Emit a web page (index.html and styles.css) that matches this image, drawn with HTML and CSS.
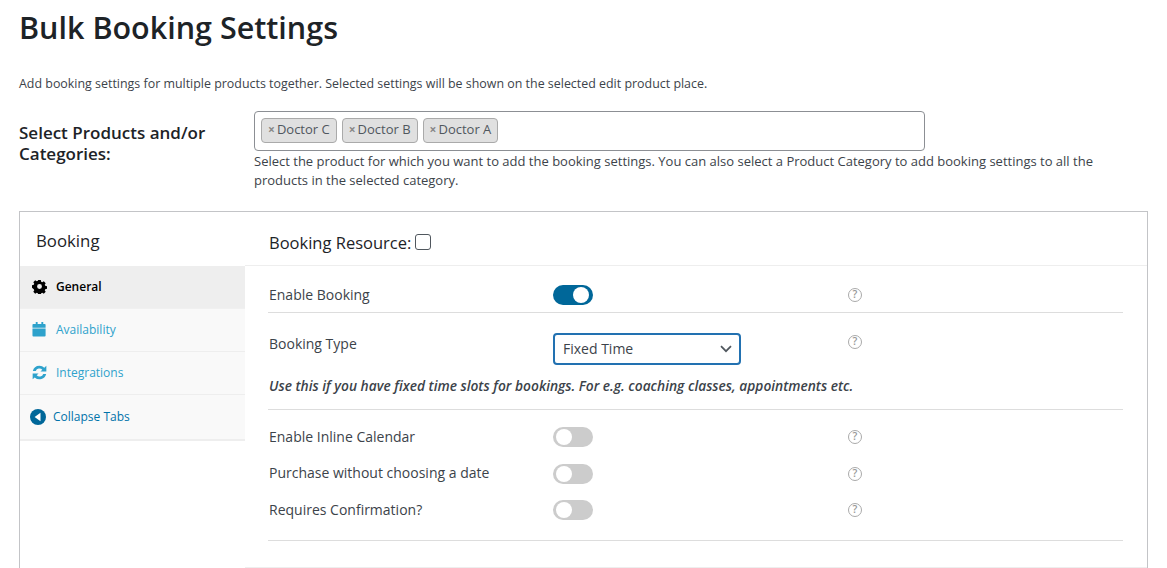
FILE: index.html
```html
<!DOCTYPE html>
<html lang="en">
<head>
  <meta charset="UTF-8">
  <title>Bulk Booking Settings</title>
  <link rel="stylesheet" href="styles.css">
</head>
<body>
  <h1>Bulk Booking Settings</h1>
  <p class="intro">Add booking settings for multiple products together. Selected settings will be shown on the selected edit product place.</p>

  <div class="select-row">
    <label class="select-label">Select Products and/or Categories:</label>
    <div class="select-col">
      <div class="tag-box">
        <span class="tag"><span class="tag-x">×</span>Doctor C</span>
        <span class="tag"><span class="tag-x">×</span>Doctor B</span>
        <span class="tag"><span class="tag-x">×</span>Doctor A</span>
      </div>
      <p class="select-help">Select the product for which you want to add the booking settings. You can also select a Product Category to add booking settings to all the products in the selected category.</p>
    </div>
  </div>

  <div class="card">
    <div class="sidebar">
      <h2 class="side-title">Booking</h2>
      <ul class="tabs">
        <li class="tab active">
          <svg class="tab-icon" viewBox="0 0 16 16"><path fill="currentColor" fill-rule="evenodd" d="M6.6 1h2.8l.4 1.9 1.1.5 1.7-1 2 2-1 1.7.5 1.1 1.9.4v2.8l-1.9.4-.5 1.1 1 1.7-2 2-1.7-1-1.1.5-.4 1.9H6.6l-.4-1.9-1.1-.5-1.7 1-2-2 1-1.7-.5-1.1L0 9.400V6.6l1.9-.4.5-1.1-1-1.7 2-2 1.7 1 1.1-.5zM8 5.4a2.6 2.6 0 1 0 0 5.200a2.6 2.6 0 0 0 0-5.200z"/></svg>
          General
        </li>
        <li class="tab">
          <svg class="tab-icon" viewBox="0 0 16 16"><path fill="currentColor" d="M4 0h2v2h4V0h2v2h1.500A1 1 0 0 1 14.500 3v3h-14V3a1 1 0 0 1 1-1H4zM.5 7h14v7.500a1 1 0 0 1-1 1h-12a1 1 0 0 1-1-1z"/></svg>
          Availability
        </li>
        <li class="tab">
          <svg class="tab-icon" viewBox="0 0 16 16"><path fill="currentColor" d="M8 .7a7.300 7.300 0 0 1 5.100 2.100L15.300.7v6.300H9l2-2a4.200 4.200 0 0 0-7 1.500H.9A7.300 7.300 0 0 1 8 .7zM.7 9H7l-2 2a4.200 4.200 0 0 0 7-1.500h3.100A7.300 7.300 0 0 1 2.900 13.200L.7 15.300z"/></svg>
          Integrations
        </li>
        <li class="tab collapse">
          <svg class="collapse-icon" viewBox="0 0 16 16"><circle cx="8" cy="8" r="8" fill="currentColor"/><path fill="#fff" d="M10.500 3.800v8.400L4.600 8z"/></svg>
          Collapse Tabs
        </li>
      </ul>
    </div>

    <div class="main">
      <div class="main-head">
        <span>Booking Resource:</span>
        <span class="checkbox"></span>
      </div>
      <div class="fields">
        <div class="field first">
          <span class="field-label">Enable Booking</span>
          <span class="toggle on"></span>
          <span class="help">?</span>
        </div>
        <div class="type-block">
          <div class="field type">
            <span class="field-label">Booking Type</span>
            <div class="fake-select">
              Fixed Time
              <svg class="chevron" viewBox="0 0 12 8"><path d="M1 1.200l5 5 5-5" fill="none" stroke="#50575e" stroke-width="1.700"/></svg>
            </div>
            <span class="help">?</span>
          </div>
          <p class="type-note">Use this if you have fixed time slots for bookings. For e.g. coaching classes, appointments etc.</p>
        </div>
        <div class="group">
          <div class="field">
            <span class="field-label">Enable Inline Calendar</span>
            <span class="toggle"></span>
            <span class="help">?</span>
          </div>
          <div class="field">
            <span class="field-label">Purchase without choosing a date</span>
            <span class="toggle"></span>
            <span class="help">?</span>
          </div>
          <div class="field">
            <span class="field-label">Requires Confirmation?</span>
            <span class="toggle"></span>
            <span class="help">?</span>
          </div>
        </div>
      </div>
      <div class="main-foot"></div>
    </div>
  </div>
</body>
</html>
```

FILE: styles.css
```css
html, body {
  height: 568px;
  overflow: hidden;
}

body {
  font-family: "Open Sans", sans-serif;
  margin: 0;
  padding: 0 19px;
  background: #fff;
  color: #3c434a;
  font-size: 13px;
}

h1 {
  margin: 0;
  padding-top: 8px;
  font-size: 30.5px;
  line-height: 38px;
  font-weight: 600;
  color: #1d2327;
}

.intro {
  margin: 28px 0 0;
  line-height: 19px;
  font-size: 12.43px;
}

.select-row {
  display: flex;
  margin-top: 18px;
}

.select-label {
  width: 235px;
  padding-top: 11px;
  font-size: 17px;
  line-height: 21px;
  font-weight: 600;
  color: #1d2327;
}

.select-col {
  width: 894px;
}

.tag-box {
  width: 671px;
  height: 40px;
  box-sizing: border-box;
  border: 1px solid #8c8f94;
  border-radius: 4px;
  padding: 6px;
  display: flex;
  gap: 5px;
}

.tag {
  height: 25px;
  box-sizing: border-box;
  padding: 0 6px;
  background: #e0e0e0;
  border: 1px solid #aaa;
  border-radius: 4px;
  font-size: 13px;
  line-height: 21px;
  color: #50575e;
}

.tag-x {
  color: #888;
  font-weight: 700;
  margin-right: 2px;
  font-size: 12px;
}

.select-help {
  margin: 1px 0 0;
  font-size: 13px;
  line-height: 19px;
}

.card {
  margin-top: 21px;
  width: 1129px;
  height: 357px;
  box-sizing: border-box;
  border: 1px solid #c3c4c7;
  border-bottom: 0;
  display: flex;
}

.sidebar {
  width: 225px;
  flex-shrink: 0;
}

.side-title {
  margin: 0;
  height: 54px;
  box-sizing: border-box;
  padding: 17px 0 0 16px;
  font-size: 16.8px;
  line-height: 24px;
  font-weight: 500;
  color: #1d2327;
}

.tabs {
  list-style: none;
  margin: 0;
  padding: 0;
  background: #f9f9f9;
  border-bottom: 2px solid #eee;
}

.tab {
  height: 42px;
  border-bottom: 1px solid #eee;
  display: flex;
  align-items: center;
  padding-left: 12px;
  font-size: 12px;
  line-height: 40px;
  color: #2ea2cc;
}

.tab.active {
  background: #eee;
  color: #000;
  font-weight: 600;
  border-bottom: 1px solid #f0f0f0;
}

.tab.collapse {
  border-bottom: 0;
  height: 44px;
  padding-left: 10px;
  color: #0073aa;
}

.tab-icon {
  width: 15px;
  height: 15px;
  margin-right: 9px;
  margin-bottom: 2px;
}

.collapse-icon {
  width: 16px;
  height: 16px;
  margin-right: 7px;
  color: #006799;
}

.main {
  flex: 1;
}

.main-head {
  height: 54px;
  box-sizing: border-box;
  border-bottom: 1px solid #eee;
  padding: 7px 0 0 24px;
  display: flex;
  align-items: center;
  gap: 4px;
  font-size: 16.5px;
  font-weight: 500;
  color: #1d2327;
}

.checkbox {
  width: 14px;
  height: 14px;
  border: 1px solid #50575e;
  border-radius: 3px;
}

.fields {
  width: 855px;
  margin-left: 23px;
  border-bottom: 1px solid #ddd;
  padding-bottom: 12px;
}

.field {
  display: flex;
  align-items: center;
  height: 36.5px;
  font-size: 14px;
  color: #3c434a;
}

.field-label {
  width: 285px;
  padding-left: 1px;
  box-sizing: border-box;
}

.field.first {
  padding-top: 12px;
  height: 34px;
  border-bottom: 1px solid #ddd;
}

.field.first .field-label {
  margin-bottom: 2px;
}

.type-block {
  border-bottom: 1px solid #ddd;
  height: 96px;
  margin-bottom: 8px;
}

.field.type {
  height: 32px;
  padding-top: 20px;
  align-items: flex-start;
}

.field.type .field-label {
  line-height: 22px;
}

.type-note {
  margin: 11px 0 0 1px;
  font-size: 13.75px;
  line-height: 20px;
  font-style: italic;
  font-weight: 600;
  color: #3c434a;
}

.toggle {
  position: relative;
  display: block;
  width: 40px;
  height: 20px;
  border-radius: 10px;
  background: #ccc;
}

.toggle::after {
  content: "";
  position: absolute;
  top: 2px;
  left: 3px;
  width: 16px;
  height: 16px;
  border-radius: 50%;
  background: #fff;
}

.toggle.on {
  background: #006799;
}

.toggle.on::after {
  left: 20px;
}

.group .toggle,
.group .help {
  margin-top: 2px;
}

.fake-select {
  width: 188px;
  height: 32px;
  box-sizing: border-box;
  border: 2px solid #2271b1;
  border-radius: 4px;
  padding-left: 8px;
  line-height: 28px;
  font-size: 14px;
  position: relative;
}

.chevron {
  position: absolute;
  right: 7px;
  top: 10px;
  width: 12px;
  height: 8px;
}

.help {
  margin-left: 255px;
  width: 14px;
  height: 14px;
  box-sizing: border-box;
  border: 1.5px solid #aaa;
  border-radius: 50%;
  font-size: 10.5px;
  line-height: 11px;
  text-align: center;
  color: #999;
  font-weight: 600;
}

.field.type .help {
  margin-left: 107px;
  margin-top: 2px;
}

.main-foot {
  height: 26px;
  border-bottom: 1px solid #eee;
}
```
